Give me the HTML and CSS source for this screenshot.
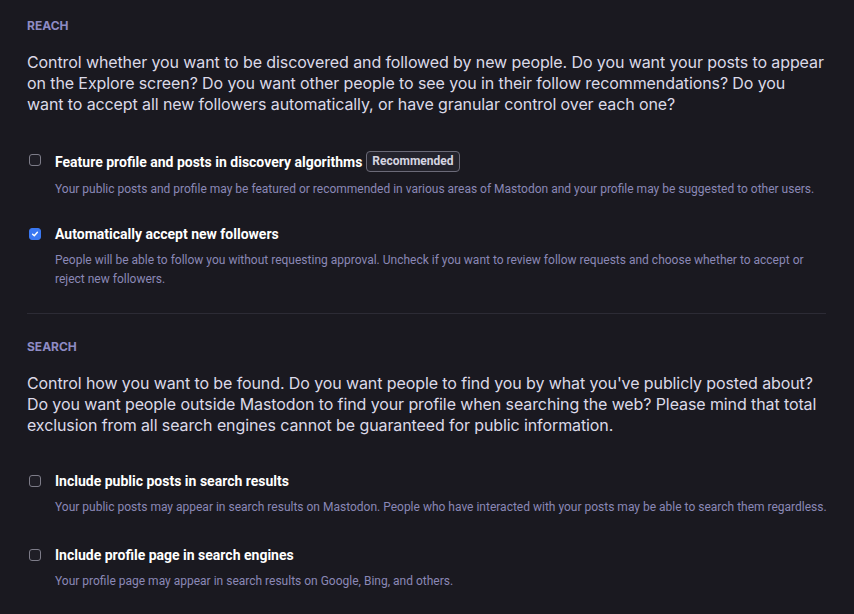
FILE: index.html
```html
<!DOCTYPE html>
<html>
<head>
<meta charset="utf-8">
<link rel="stylesheet" href="styles.css">
</head>
<body>
<div class="page">
  <section class="group">
    <h4 class="heading">REACH</h4>
    <p class="lead">Control whether you want to be discovered and followed by new people. Do you want your posts to appear on the Explore screen? Do you want other people to see you in their follow recommendations? Do you want to accept all new followers automatically, or have granular control over each one?</p>
    <div class="option">
      <span class="box"></span>
      <div class="text">
        <div class="label">Feature profile and posts in discovery algorithms <span class="badge">Recommended</span></div>
        <div class="hint">Your public posts and profile may be featured or recommended in various areas of Mastodon and your profile may be suggested to other users.</div>
      </div>
    </div>
    <div class="option after-badge">
      <span class="box checked"><svg viewBox="0 0 10 10" width="10" height="10"><path d="M2.6 5.2 L4.3 6.8 L7.4 3.3" fill="none" stroke="#fff" stroke-width="1.4" stroke-linecap="round" stroke-linejoin="round"/></svg></span>
      <div class="text">
        <div class="label">Automatically accept new followers</div>
        <div class="hint narrow">People will be able to follow you without requesting approval. Uncheck if you want to review follow requests and choose whether to accept or reject new followers.</div>
      </div>
    </div>
  </section>
  <hr class="sep">
  <section class="group">
    <h4 class="heading">SEARCH</h4>
    <p class="lead">Control how you want to be found. Do you want people to find you by what you've publicly posted about? Do you want people outside Mastodon to find your profile when searching the web? Please mind that total exclusion from all search engines cannot be guaranteed for public information.</p>
    <div class="option">
      <span class="box"></span>
      <div class="text">
        <div class="label">Include public posts in search results</div>
        <div class="hint">Your public posts may appear in search results on Mastodon. People who have interacted with your posts may be able to search them regardless.</div>
      </div>
    </div>
    <div class="option">
      <span class="box"></span>
      <div class="text">
        <div class="label">Include profile page in search engines</div>
        <div class="hint">Your profile page may appear in search results on Google, Bing, and others.</div>
      </div>
    </div>
  </section>
</div>
</body>
</html>
```

FILE: styles.css
```css
html, body {
  margin: 0;
  padding: 0;
  background: #1a1920;
}
body {
  font-family: Roboto, "Noto Sans", sans-serif;
  -webkit-font-smoothing: antialiased;
}
.page {
  padding: 18px 16px 0 27px;
}
.group {
  display: flex;
  flex-direction: column;
}
.heading {
  margin: 0;
  font-family: Inter, Roboto, sans-serif;
  font-size: 12px;
  font-weight: 700;
  line-height: 16px;
  color: #8e8bc4;
}
.lead {
  margin: 18px 13px 0 0;
  font-family: Inter, Roboto, sans-serif;
  font-size: 16px;
  letter-spacing: -0.1px;
  line-height: 21px;
  color: #dcdae8;
}
.option {
  display: flex;
  align-items: flex-start;
  gap: 14px;
  margin-top: 36px;
}
.group .option + .option {
  margin-top: 29px;
}
.group .option.after-badge {
  margin-top: 26px;
}
.box {
  flex: none;
  width: 10px;
  height: 10px;
  margin: 3px 0 0 2px;
  border: 1px solid #7d7c88;
  border-radius: 3px;
  background: #1f1e26;
  display: flex;
  align-items: center;
  justify-content: center;
}
.box.checked {
  background: #3a78f2;
  border-color: #3a78f2;
}
.text {
  display: flex;
  flex-direction: column;
  gap: 8px;
}
.label {
  font-size: 14px;
  font-weight: 700;
  line-height: 18px;
  color: #ffffff;
  display: flex;
  align-items: center;
  gap: 4px;
}
.badge {
  font-size: 12px;
  font-weight: 700;
  line-height: 15px;
  color: #d6d5e0;
  border: 1px solid #6b6a78;
  border-radius: 4px;
  padding: 2px 5px;
  background: #24232c;
}
.hint {
  font-size: 12px;
  line-height: 19px;
  color: #8a88b6;
}
.hint.narrow {
  max-width: 760px;
}
.sep {
  border: 0;
  border-top: 1px solid #2c2b35;
  margin: 24px 12px 25px 0;
}
```
